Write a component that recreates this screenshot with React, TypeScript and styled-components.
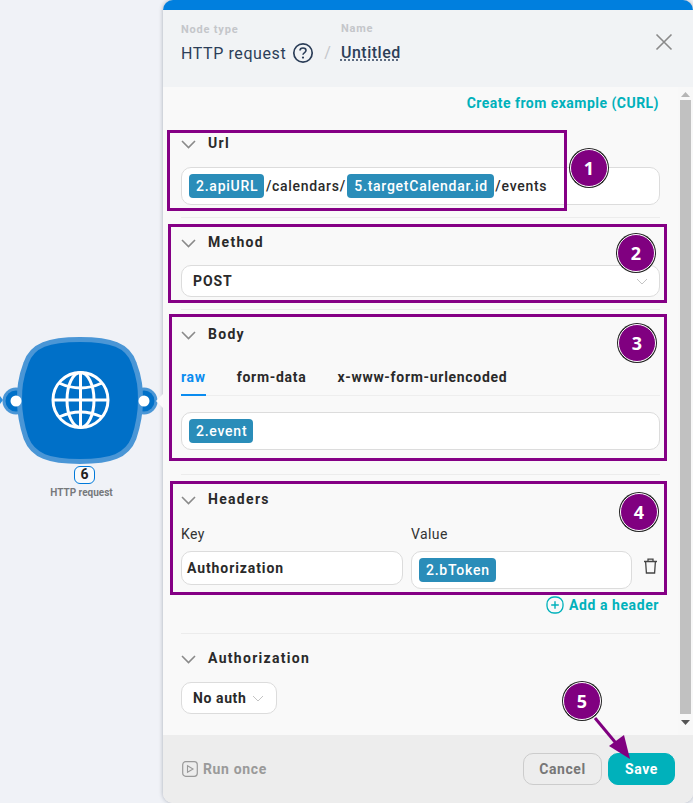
import { ReactNode } from "react";
import styled, { createGlobalStyle } from "styled-components";

const GlobalStyle = createGlobalStyle`
  html, body {
    margin: 0;
    padding: 0;
    width: 693px;
    height: 803px;
    overflow: hidden;
    background: #f0f2f7;
    font-family: Roboto, "Liberation Sans", sans-serif;
  }
  * { box-sizing: border-box; }
`;

const Page = styled.div`
  position: relative;
  display: flex;
  width: 693px;
  height: 803px;
`;

/* left canvas with the module */
const Canvas = styled.div`
  width: 163px;
  flex: none;
  display: flex;
  flex-direction: column;
  align-items: center;
  padding-top: 335px;
`;

const NodeBadge = styled.div`
  width: 21px;
  height: 18px;
  margin: 1px 0 0 6px;
  border: 1.5px solid #0079da;
  border-radius: 6px;
  background: #f8fafc;
  color: #222;
  font-size: 14px;
  font-weight: 700;
  line-height: 15px;
  text-align: center;
`;

const NodeLabel = styled.div`
  margin-top: 3px;
  font-size: 10px;
  font-weight: 700;
  line-height: 12px;
  color: #77797c;
`;

/* side panel */
const Panel = styled.div`
  position: relative;
  width: 530px;
  height: 803px;
  display: flex;
  flex-direction: column;
  border-top: 10px solid #007fde;
  border-radius: 10px;
  background: #f9f9f9;
  box-shadow: 0 0 4px rgba(60, 70, 90, 0.4);
  overflow: hidden;
`;

const Notch = styled.div`
  position: absolute;
  left: 156px;
  top: 394px;
  width: 0;
  height: 0;
  border-top: 7px solid transparent;
  border-bottom: 7px solid transparent;
  border-right: 7px solid #fafafa;
  z-index: 2;
`;

const Header = styled.div`
  height: 77px;
  flex: none;
  display: flex;
  align-items: flex-start;
  padding: 12px 0 0 18px;
  background: #f1f3f5;
`;

const HeaderCol = styled.div<{ $top?: number }>`
  display: flex;
  flex-direction: column;
  padding-top: ${(p) => p.$top ?? 0}px;
`;

const SmallLabel = styled.div`
  font-size: 11px;
  font-weight: 700;
  line-height: 14px;
  letter-spacing: 0.8px;
  color: #c4c6ca;
`;

const TypeRow = styled.div`
  display: flex;
  align-items: center;
  height: 22px;
  margin-top: 5px;
  font-size: 16px;
  letter-spacing: 0.6px;
  color: #2c3e58;
`;

const Slash = styled.div`
  margin: 20px 10px 0 10px;
  font-size: 16px;
  line-height: 22px;
  color: #c4c6ca;
`;

const NameText = styled.div`
  margin-top: 6px;
  font-size: 16px;
  font-weight: 500;
  line-height: 22px;
  letter-spacing: 0.5px;
  color: #2c3e58;
  text-decoration: underline dotted #5d6b80 2px;
  text-underline-offset: 1px;
`;

const CloseButton = styled.div`
  margin: 11px 0 0 auto;
  padding-right: 20px;
  height: 18px;
`;

const HelpSvg = styled.svg`
  margin-left: 6px;
`;

const Scroller = styled.div`
  flex: 1;
  min-height: 0;
  display: flex;
`;

const Content = styled.div`
  width: 515px;
  padding: 8px 18px 0;
`;

const FakeScrollbar = styled.div`
  width: 15px;
  flex: none;
  display: flex;
  flex-direction: column;
  align-items: center;
  padding-top: 5px;
  background: #f8f8f8;
`;

const ScrollThumb = styled.div`
  width: 11px;
  height: 614px;
  margin: 3px 0 6px;
  background: #c1c1c1;
`;

const LinkRow = styled.div`
  display: flex;
  justify-content: flex-end;
  margin-bottom: 8px;
  padding-right: 1px;
`;

const TealLink = styled.span`
  font-size: 14px;
  font-weight: 700;
  line-height: 16px;
  letter-spacing: 0.47px;
  color: #00b1bb;
`;

const Section = styled.div<{ $pad: number; $last?: boolean }>`
  padding: 16px 0 ${(p) => p.$pad}px;
  border-bottom: ${(p) => (p.$last ? "none" : "1px solid #ececec")};
`;

const SectionTitle = styled.div<{ $gap: number }>`
  display: flex;
  align-items: center;
  gap: 12px;
  height: 16px;
  margin-bottom: ${(p) => p.$gap}px;
  font-size: 14px;
  font-weight: 700;
  letter-spacing: 1.3px;
  color: #2a2a2a;
`;

const ChevronWrap = styled.svg`
  width: 15px;
  height: 9px;
  margin-top: 3px;
  flex: none;
`;

const Field = styled.div<{ $height: number; $width?: number }>`
  display: flex;
  align-items: center;
  gap: 1.5px;
  width: ${(p) => (p.$width ? `${p.$width}px` : "100%")};
  height: ${(p) => p.$height}px;
  padding: 0 7px;
  border: 1px solid #dcdcdc;
  border-radius: 10px;
  background: #fff;
  font-size: 14px;
  font-weight: 500;
  letter-spacing: 0.7px;
  color: #2a2a2a;
  white-space: nowrap;
`;

const SelectField = styled(Field)`
  justify-content: space-between;
  padding: 0 11px;
  font-weight: 700;
  letter-spacing: 0.9px;
`;

const AuthSelect = styled(SelectField)`
  justify-content: flex-start;
  gap: 6px;
  letter-spacing: 0.6px;
`;

const Pill = styled.span`
  display: inline-flex;
  align-items: center;
  height: 24px;
  padding: 0 6px 0 7px;
  border-radius: 4px;
  background: #2a8db9;
  color: #fff;
  font-weight: 500;
  letter-spacing: 0.75px;
`;

const Tabs = styled.div`
  display: flex;
  gap: 31px;
  height: 27px;
  margin-bottom: 16px;
  border-bottom: 1px solid #eeeeee;
`;

const Tab = styled.div<{ $active?: boolean }>`
  height: 27px;
  font-size: 14px;
  font-weight: 700;
  line-height: 16px;
  letter-spacing: 0.7px;
  color: ${(p) => (p.$active ? "#0a8cf0" : "#2a2a2a")};
  border-bottom: 2px solid ${(p) => (p.$active ? "#0a8cf0" : "transparent")};
`;

const HeaderGrid = styled.div`
  display: grid;
  grid-template-columns: 222px 221px 1fr;
  column-gap: 8px;
  row-gap: 9px;
  align-items: start;
`;

const FieldLabel = styled.div`
  font-size: 14px;
  line-height: 16px;
  letter-spacing: 0.4px;
  color: #333;
`;

const KeyField = styled(Field)`
  padding: 0 5px;
  font-weight: 700;
  letter-spacing: 0.9px;
`;

const TrashCell = styled.div`
  display: flex;
  justify-content: center;
  padding-top: 7px;
`;

const AddRow = styled.div`
  display: flex;
  justify-content: flex-end;
  align-items: center;
  gap: 5px;
  height: 16px;
  margin-top: 8px;
  padding-right: 1px;
`;

const AddLink = styled(TealLink)`
  letter-spacing: 0.58px;
`;

const Footer = styled.div`
  height: 68px;
  flex: none;
  display: flex;
  align-items: center;
  padding: 0 18px 0 19px;
  background: #ededed;
`;

const RunOnce = styled.div`
  display: flex;
  align-items: center;
  gap: 5px;
  margin-right: auto;
  font-size: 14px;
  font-weight: 700;
  letter-spacing: 0.65px;
  color: #9a9a9a;
`;

const Button = styled.div<{ $primary?: boolean }>`
  display: flex;
  align-items: center;
  justify-content: center;
  width: ${(p) => (p.$primary ? "67px" : "79px")};
  height: 32px;
  margin-left: ${(p) => (p.$primary ? "6px" : "0")};
  border-radius: 10px;
  border: 1px solid ${(p) => (p.$primary ? "#00b1bb" : "#cccccc")};
  background: ${(p) => (p.$primary ? "#00b1bb" : "transparent")};
  color: ${(p) => (p.$primary ? "#fff" : "#777")};
  font-size: 14px;
  font-weight: 700;
  letter-spacing: 0.6px;
`;

/* purple markers laid on top of the screenshot */
const MarkBox = styled.div<{ $x: number; $y: number; $w: number; $h: number }>`
  position: absolute;
  left: ${(p) => p.$x}px;
  top: ${(p) => p.$y}px;
  width: ${(p) => p.$w}px;
  height: ${(p) => p.$h}px;
  border: 3px solid #850085;
  pointer-events: none;
  z-index: 5;
`;

const MarkNumber = styled.div<{ $x: number; $y: number }>`
  position: absolute;
  left: ${(p) => p.$x - 19}px;
  top: ${(p) => p.$y - 19}px;
  width: 38px;
  height: 38px;
  display: flex;
  align-items: center;
  justify-content: center;
  border-radius: 50%;
  background: #800080;
  border: 1px solid #fff;
  box-shadow: 0 0 0 1px #222;
  color: #fff;
  font-family: "Noto Sans", sans-serif;
  font-size: 18px;
  font-weight: 700;
  z-index: 6;
`;

const MarkArrow = styled.svg`
  position: absolute;
  left: 590px;
  top: 712px;
  z-index: 6;
`;

const Chevron = () => (
  <ChevronWrap viewBox="0 0 15 9">
    <path d="M1 1 L7.5 7.5 L14 1" fill="none" stroke="#8a8a8a" strokeWidth="1.6" />
  </ChevronWrap>
);

const SmallChevron = () => (
  <svg width="12" height="7" viewBox="0 0 12 7">
    <path d="M1 1 L6 6 L11 1" fill="none" stroke="#c4c4c4" strokeWidth="1" />
  </svg>
);

const NodeIcon = () => (
  <svg width="163" height="130" viewBox="0 335 163 130">
    <path d="M0 396 L3 400 L0 404 Z" fill="#2f8fdc" />
    <circle cx="16" cy="401" r="13.5" fill="#4a96d6" />
    <circle cx="16" cy="401" r="10.5" fill="#0070c8" />
    <circle cx="144" cy="401" r="13.5" fill="#4a96d6" />
    <circle cx="144" cy="401" r="10.5" fill="#0070c8" />
    <path
      d="M80 339.5 C111 339.5 128 345 134 363 C140 379 140.5 389 140.5 400 C140.5 413 139 423 134 438 C127 456 111 461.5 80 461.5 C49 461.5 33 456 26 438 C21 423 19.5 413 19.5 400 C19.5 389 20 379 26 363 C32 345 49 339.5 80 339.5 Z"
      fill="#0070c8"
      stroke="#4a96d6"
      strokeWidth="5"
    />
    <circle cx="16" cy="401" r="5.5" fill="#fff" />
    <circle cx="144" cy="401" r="5.5" fill="#fff" />
    <g fill="none" stroke="#fff" strokeWidth="3">
      <circle cx="80.5" cy="400" r="27.5" />
      <ellipse cx="80.5" cy="400" rx="13.5" ry="27.5" />
      <path d="M80.5 372.5 V427.5 M53 400 H108" />
      <path d="M59 383 Q80.5 393 102 383" />
      <path d="M59 417 Q80.5 407 102 417" />
    </g>
  </svg>
);

const HelpIcon = () => (
  <HelpSvg width="22" height="22" viewBox="0 0 22 22">
    <circle cx="11" cy="11" r="9.2" fill="none" stroke="#2c3e58" strokeWidth="1.7" />
    <path d="M8 8.6 C8 6.8 9.4 6 11 6 C12.7 6 14 7 14 8.5 C14 10.5 11 10.6 11 12.8" fill="none" stroke="#2c3e58" strokeWidth="1.6" />
    <circle cx="11" cy="15.6" r="1.1" fill="#2c3e58" />
  </HelpSvg>
);

const TrashIcon = () => (
  <svg width="15" height="16" viewBox="0 0 15 16">
    <path d="M1 3.5 H14 M5 3.5 V1.2 H10 V3.5 M2.6 3.5 L3.4 15 H11.6 L12.4 3.5" fill="none" stroke="#444" strokeWidth="1.3" />
  </svg>
);

const PlusIcon = () => (
  <svg width="18" height="18" viewBox="0 0 18 18">
    <rect x="1" y="1" width="16" height="16" rx="7" fill="none" stroke="#00b1bb" strokeWidth="1.3" />
    <path d="M9 5.2 V12.8 M5.2 9 H12.8" stroke="#00b1bb" strokeWidth="1.4" />
  </svg>
);

const PlayIcon = () => (
  <svg width="16" height="16" viewBox="0 0 16 16">
    <rect x="0.7" y="0.7" width="14.6" height="14.6" rx="3" fill="none" stroke="#9a9a9a" strokeWidth="1.2" />
    <path d="M5.5 4.8 L11 8 L5.5 11.2 Z" fill="none" stroke="#9a9a9a" strokeWidth="1.1" />
  </svg>
);

const SectionHead = ({ gap, children }: { gap: number; children: ReactNode }) => (
  <SectionTitle $gap={gap}>
    <Chevron />
    {children}
  </SectionTitle>
);

const marks = [
  { x: 167, y: 130, w: 400, h: 81 },
  { x: 168, y: 224, w: 499, h: 79 },
  { x: 169, y: 314, w: 498, h: 147 },
  { x: 170, y: 481, w: 497, h: 114 },
];

const numbers = [
  { x: 589, y: 168 },
  { x: 636, y: 253 },
  { x: 637, y: 343 },
  { x: 639, y: 512 },
  { x: 582, y: 701 },
];

const App = () => {
  return (
    <Page>
      <GlobalStyle />
      <Canvas>
        <NodeIcon />
        <NodeBadge>6</NodeBadge>
        <NodeLabel>HTTP request</NodeLabel>
      </Canvas>

      <Panel>
        <Header>
          <HeaderCol $top={1}>
            <SmallLabel>Node type</SmallLabel>
            <TypeRow>
              HTTP request
              <HelpIcon />
            </TypeRow>
          </HeaderCol>
          <Slash>/</Slash>
          <HeaderCol>
            <SmallLabel>Name</SmallLabel>
            <NameText>Untitled</NameText>
          </HeaderCol>
          <CloseButton>
            <svg width="18" height="18" viewBox="0 0 18 18">
              <path d="M1.5 1.5 L16.5 16.5 M16.5 1.5 L1.5 16.5" stroke="#8a8a8a" strokeWidth="1.6" />
            </svg>
          </CloseButton>
        </Header>

        <Scroller>
          <Content>
            <LinkRow>
              <TealLink>Create from example (CURL)</TealLink>
            </LinkRow>

            <Section $pad={12}>
              <SectionHead gap={16}>Url</SectionHead>
              <Field $height={38}>
                <Pill>2.apiURL</Pill>
                /calendars/
                <Pill>5.targetCalendar.id</Pill>
                /events
              </Field>
            </Section>

            <Section $pad={12}>
              <SectionHead gap={15}>Method</SectionHead>
              <SelectField $height={32}>
                POST
                <SmallChevron />
              </SelectField>
            </Section>

            <Section $pad={24}>
              <SectionHead gap={27}>Body</SectionHead>
              <Tabs>
                <Tab $active>raw</Tab>
                <Tab>form-data</Tab>
                <Tab>x-www-form-urlencoded</Tab>
              </Tabs>
              <Field $height={38}>
                <Pill>2.event</Pill>
              </Field>
            </Section>

            <Section $pad={20}>
              <SectionHead gap={19}>Headers</SectionHead>
              <HeaderGrid>
                <FieldLabel>Key</FieldLabel>
                <FieldLabel>Value</FieldLabel>
                <span />
                <KeyField $height={34}>Authorization</KeyField>
                <Field $height={38}>
                  <Pill>2.bToken</Pill>
                </Field>
                <TrashCell>
                  <TrashIcon />
                </TrashCell>
              </HeaderGrid>
              <AddRow>
                <PlusIcon />
                <AddLink>Add a header</AddLink>
              </AddRow>
            </Section>

            <Section $pad={0} $last>
              <SectionHead gap={16}>Authorization</SectionHead>
              <AuthSelect $height={32} $width={96}>
                No auth
                <SmallChevron />
              </AuthSelect>
            </Section>
          </Content>
          <FakeScrollbar>
            <svg width="9" height="5" viewBox="0 0 9 5">
              <path d="M4.5 0 L9 5 H0 Z" fill="#b5b5b5" />
            </svg>
            <ScrollThumb />
            <svg width="9" height="5" viewBox="0 0 9 5">
              <path d="M0 0 H9 L4.5 5 Z" fill="#555" />
            </svg>
          </FakeScrollbar>
        </Scroller>

        <Footer>
          <RunOnce>
            <PlayIcon />
            Run once
          </RunOnce>
          <Button>Cancel</Button>
          <Button $primary>Save</Button>
        </Footer>
      </Panel>

      <Notch />

      {marks.map((m) => (
        <MarkBox key={m.y} $x={m.x} $y={m.y} $w={m.w} $h={m.h} />
      ))}
      {numbers.map((n, i) => (
        <MarkNumber key={n.y} $x={n.x} $y={n.y}>
          {i + 1}
        </MarkNumber>
      ))}
      <MarkArrow width="45" height="52" viewBox="590 712 45 52">
        <path d="M595 718 L620 748" stroke="#800080" strokeWidth="3" fill="none" />
        <path d="M630 759 L609 746 L624 735 Z" fill="#800080" />
      </MarkArrow>
    </Page>
  );
};

export default App;
